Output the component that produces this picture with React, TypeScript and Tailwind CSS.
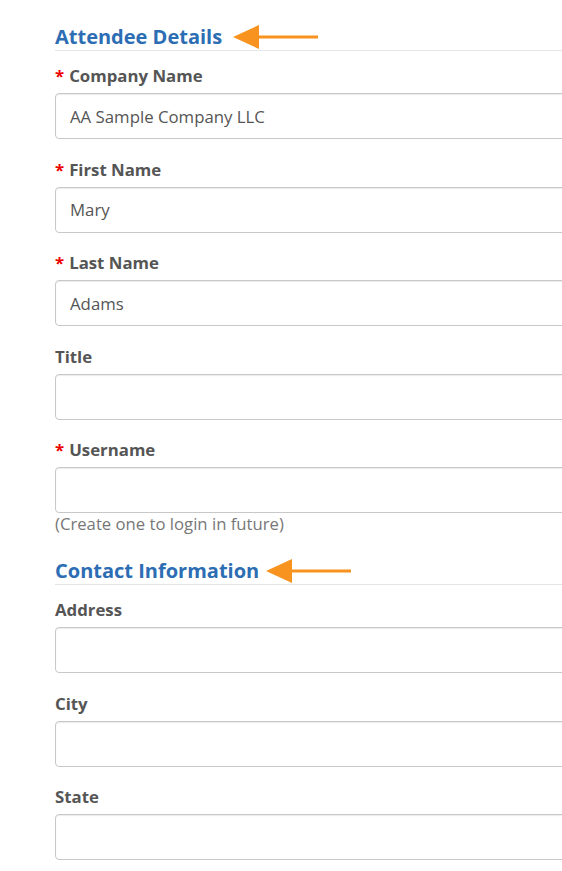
import React from "react"

interface Field {
  label: string
  required?: boolean
  value?: string
  hint?: string
}

const attendee: Field[] = [
  { label: "Company Name", required: true, value: "AA Sample Company LLC" },
  { label: "First Name", required: true, value: "Mary" },
  { label: "Last Name", required: true, value: "Adams" },
  { label: "Title" },
  { label: "Username", required: true, hint: "(Create one to login in future)" },
]

const contact: Field[] = [{ label: "Address" }, { label: "City" }, { label: "State" }]

function Arrow({ gap }: { gap: string }) {
  return (
    <svg width="86" height="26" viewBox="0 0 86 26" className={`${gap} shrink-0`}>
      <polygon points="0,13 26,1 26,25" fill="#f7931e" />
      <rect x="24" y="11.5" width="61" height="3" fill="#f7931e" />
    </svg>
  )
}

function SectionHeading({ title, gap }: { title: string; gap: string }) {
  return (
    <div className="flex items-center border-b border-[#e5e5e5] h-[27px]">
      <h2 className="text-[20px] leading-[26px] font-bold text-[#2c6db3]">{title}</h2>
      <Arrow gap={gap} />
    </div>
  )
}

function FormField({ field }: { field: Field }) {
  return (
    <div>
      <label className="block text-[16.8px] leading-[22px] font-bold text-[#555]">
        {field.required && <span className="text-[#e00] mr-[5px]">*</span>}
        {field.label}
      </label>
      <input
        readOnly
        value={field.value ?? ""}
        className="mt-[6px] block w-full h-[46px] rounded-[4px] border border-[#c8c8c8] bg-white px-[14px] text-[16.8px] text-[#555] shadow-[inset_0_1px_1px_rgba(0,0,0,0.08)] outline-none"
      />
      {field.hint && (
        <p className="mt-[1px] text-[16.7px] leading-[20px] text-[#777]">{field.hint}</p>
      )}
    </div>
  )
}

export default function App() {
  return (
    <div className="w-[562px] h-[871px] overflow-hidden bg-white" style={{ fontFamily: '"Open Sans", "Noto Sans", sans-serif' }}>
      <div className="w-[640px] pl-[55px] pt-[24px]">
        <SectionHeading title="Attendee Details" gap="ml-[11px]" />
        <div className="mt-[14px] flex flex-col gap-[19.5px]">
          {attendee.map((f) => (
            <FormField key={f.label} field={f} />
          ))}
        </div>
        <div className="mt-[24px]">
          <SectionHeading title="Contact Information" gap="ml-[7px]" />
        </div>
        <div className="mt-[14px] flex flex-col gap-[19.7px]">
          {contact.map((f) => (
            <FormField key={f.label} field={f} />
          ))}
        </div>
      </div>
    </div>
  )
}
